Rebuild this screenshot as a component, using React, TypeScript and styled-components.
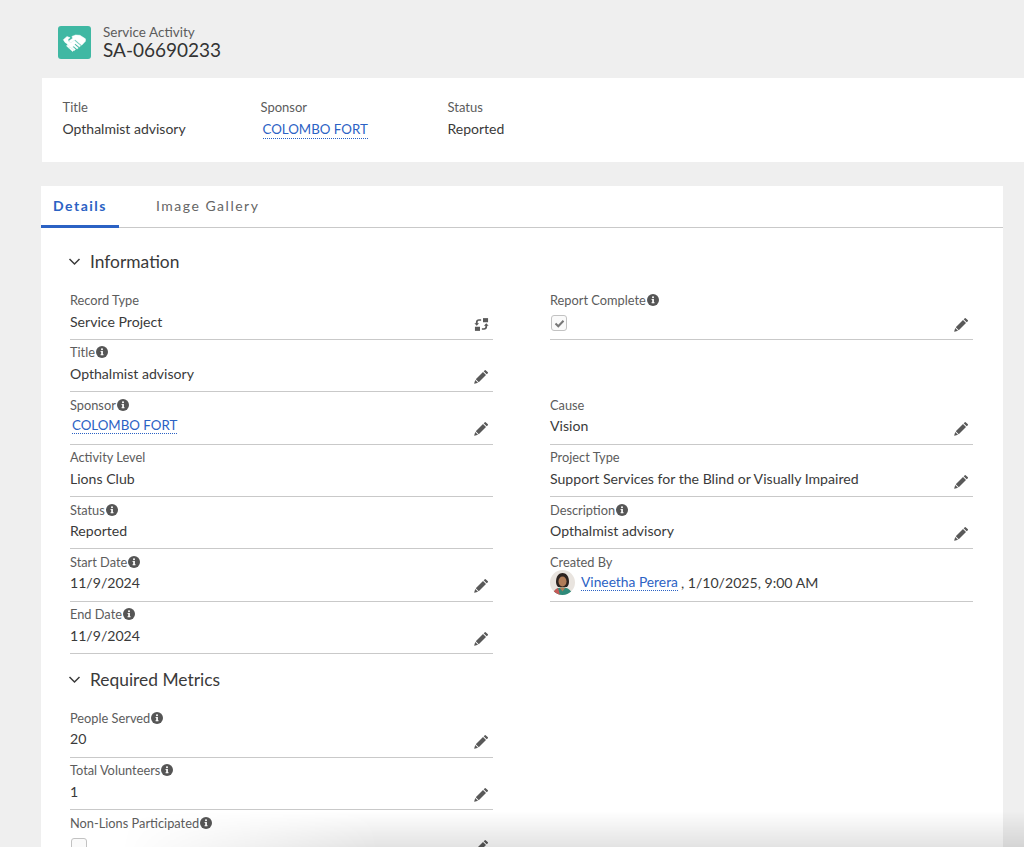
import styled, { createGlobalStyle } from 'styled-components'
import { ReactNode } from 'react'

const GlobalStyle = createGlobalStyle`
    html, body {
        margin: 0;
        height: 847px;
        overflow: hidden;
        background: #efefef;
    }
    body {
        font-family: "Lato", "Open Sans", sans-serif;
        color: #3a3a3a;
    }
`

const PencilIcon = () => (
    <svg width="15" height="15" viewBox="0 0 16 16" fill="#595959">
        <path d="M11.6 1.2a.6.6 0 0 1 .85 0l2.35 2.35a.6.6 0 0 1 0 .85L13.5 5.7l-3.2-3.2z" />
        <path d="M9.6 3.2l3.2 3.2-7.700 7.700-3.2-3.2z" />
        <path d="M1.3 11.700l3 3-3.700.9a.3.3 0 0 1-.35-.35z" />
    </svg>
)

const SwapIcon = () => (
    <svg width="15" height="15" viewBox="0 0 16 16" fill="#595959">
        <rect x="9.600" y="1.200" width="5.400" height="4.400" />
        <rect x="1" y="10.400" width="5.400" height="4.400" />
        <path d="M7.600 2.400v1.700H5.400c-.9 0-1.500.6-1.500 1.500v1h1.500L2.900 9.400.4 6.600h1.600v-1c0-1.900 1.400-3.200 3.300-3.200z" />
        <path d="M8.400 13.600v-1.700h2.200c.9 0 1.500-.6 1.500-1.500v-1h-1.500l2.500-2.800 2.500 2.800H14v1c0 1.900-1.400 3.200-3.300 3.200z" />
    </svg>
)

const InfoIcon = () => (
    <InfoWrap viewBox="0 0 12 12">
        <circle cx="6" cy="6" r="6" fill="#555" />
        <rect x="5.200" y="5" width="1.700" height="4.100" fill="#fff" />
        <rect x="4.500" y="8.300" width="3.100" height="0.900" fill="#fff" />
        <rect x="4.500" y="5" width="1.500" height="0.800" fill="#fff" />
        <circle cx="6" cy="3.300" r="1" fill="#fff" />
    </InfoWrap>
)

const HandshakeIcon = () => (
    <svg width="25" height="25" viewBox="0 0 24 24" fill="#fff" stroke="#fff" strokeWidth="0.5">
        <path d="M9.500 6.200 13 4.800l4.200.3 5.300 3.400v2.200l-3.600 3.900-6.300-5.200-3.200 2.200c-1 .6-2.300 0-2.500-1.200l3.400-2.400z" />
        <path d="M1.300 9.300 4.800 6.300l3 1.100-2 1.500c-.1 1.800 1.200 3 3 3.100l3-2 6 5-1 1.300-3.900-3.200-.9 1 3.600 3-1 1.200-3.600-3-.8 1 2.700 2.300-1 1.100-5.500-4.700-2.200-2.400-1.300-.7z" />
        <path d="M4.300 15.300l1-1 2.600 2.100-1 1.100zM7 17.800l1-1.100 3.300 2.800-1 1.100z" />
    </svg>
)

const Avatar = () => (
    <AvatarWrap viewBox="0 0 25 25">
        <rect width="25" height="25" fill="#e9e4df" />
        <path d="M6 12c0-6 3-9 6.500-9S19 6 19 12c0 2-1 4-2 5H8c-1-1-2-3-2-5z" fill="#2c2320" />
        <ellipse cx="12.500" cy="11.500" rx="4" ry="5" fill="#b07c58" />
        <path d="M3 25c.5-5 4-7.500 9.500-7.500S21.500 20 22 25z" fill="#2f8a7a" />
        <path d="M9.500 17.500h6l-3 4z" fill="#b07c58" />
        <path d="M3 25c.5-4 2-6 5-7l2 7z" fill="#c65a57" />
    </AvatarWrap>
)

type FieldProps = {
    label?: string,
    info?: boolean,
    value?: ReactNode,
    action?: 'edit' | 'swap',
    blank?: boolean,
}

const Field = ({ label, info, value, action, blank }: FieldProps) => {
    if (blank) return <FieldBox $blank />
    return (
        <FieldBox>
            <FieldLabel>{label}{info && <InfoIcon />}</FieldLabel>
            <FieldValue>{value}</FieldValue>
            {action && (
                <ActionSlot>
                    {action === 'edit' ? <PencilIcon /> : <SwapIcon />}
                </ActionSlot>
            )}
        </FieldBox>
    )
}

const Chevron = () => (
    <svg width="13" height="13" viewBox="0 0 13 13" fill="none" stroke="#3a3a3a" strokeWidth="1.5">
        <path d="M1.500 4l5 5 5-5" />
    </svg>
)

export default function App() {
    return (
        <>
            <GlobalStyle />
            <Page>
                <Header>
                    <IconTile><HandshakeIcon /></IconTile>
                    <HeaderText>
                        <ObjectName>Service Activity</ObjectName>
                        <RecordName>SA-06690233</RecordName>
                    </HeaderText>
                </Header>

                <Highlights>
                    <HighlightItem $width={198}>
                        <HighlightLabel>Title</HighlightLabel>
                        <HighlightValue>Opthalmist advisory</HighlightValue>
                    </HighlightItem>
                    <HighlightItem $width={187}>
                        <HighlightLabel>Sponsor</HighlightLabel>
                        <HighlightLink>COLOMBO FORT</HighlightLink>
                    </HighlightItem>
                    <HighlightItem $width={120}>
                        <HighlightLabel>Status</HighlightLabel>
                        <HighlightValue>Reported</HighlightValue>
                    </HighlightItem>
                </Highlights>

                <Card>
                    <Tabs>
                        <Tab $active>Details</Tab>
                        <Tab>Image Gallery</Tab>
                    </Tabs>
                    <Body>
                        <SectionTitle>
                            <Chevron />
                            Information
                        </SectionTitle>
                        <FieldGrid>
                            <Field label="Record Type" value="Service Project" action="swap" />
                            <Field
                                label="Report Complete"
                                info
                                value={
                                    <Checkbox>
                                        <svg width="11" height="11" viewBox="0 0 11 11" fill="none" stroke="#777" strokeWidth="2">
                                            <path d="M1.500 5.500l2.800 2.800 5.200-5.600" />
                                        </svg>
                                    </Checkbox>
                                }
                                action="edit"
                            />
                            <Field label="Title" info value="Opthalmist advisory" action="edit" />
                            <Field blank />
                            <Field label="Sponsor" info value={<SponsorLink>COLOMBO FORT</SponsorLink>} action="edit" />
                            <Field label="Cause" value="Vision" action="edit" />
                            <Field label="Activity Level" value="Lions Club" />
                            <Field label="Project Type" value="Support Services for the Blind or Visually Impaired" action="edit" />
                            <Field label="Status" info value="Reported" />
                            <Field label="Description" info value="Opthalmist advisory" action="edit" />
                            <Field label="Start Date" info value="11/9/2024" action="edit" />
                            <Field
                                label="Created By"
                                value={
                                    <CreatedBy>
                                        <Avatar />
                                        <PersonLink>Vineetha Perera</PersonLink>, 1/10/2025, 9:00 AM
                                    </CreatedBy>
                                }
                            />
                            <Field label="End Date" info value="11/9/2024" action="edit" />
                        </FieldGrid>

                        <SectionTitle $second>
                            <Chevron />
                            Required Metrics
                        </SectionTitle>
                        <FieldGrid>
                            <Field label="People Served" info value="20" action="edit" />
                            <Field blank />
                            <Field label="Total Volunteers" info value="1" action="edit" />
                            <Field blank />
                            <Field label="Non-Lions Participated" info value={<Checkbox />} action="edit" />
                        </FieldGrid>
                    </Body>
                </Card>
                <BottomFade />
            </Page>
        </>
    )
}

const Page = styled.div`
    position: relative;
    height: 847px;
    overflow: hidden;
    background: #efefef;
`

const Header = styled.header`
    display: flex;
    align-items: flex-start;
    gap: 12px;
    height: 78px;
    padding: 26px 0 0 58px;
    box-sizing: border-box;
`

const IconTile = styled.div`
    display: flex;
    align-items: center;
    justify-content: center;
    width: 33px;
    height: 33px;
    border-radius: 3px;
    background: #3fb8a3;
`

const HeaderText = styled.div`
    display: flex;
    flex-direction: column;
`

const ObjectName = styled.div`
    font-size: 13.5px;
    line-height: 13px;
    color: #5c5c5c;
`

const RecordName = styled.div`
    font-size: 19px;
    line-height: 22px;
    color: #333;
`

const Highlights = styled.section`
    display: flex;
    height: 84px;
    margin-left: 42px;
    padding: 21px 0 0 20.5px;
    box-sizing: border-box;
    background: #fff;
`

const HighlightItem = styled.div<{ $width: number }>`
    width: ${p => p.$width}px;
`

const HighlightLabel = styled.div`
    font-size: 13px;
    line-height: 16px;
    color: #5c5c5c;
`

const HighlightValue = styled.div`
    margin-top: 5px;
    font-size: 14px;
    line-height: 18px;
    color: #3a3a3a;
`

const HighlightLink = styled.a`
    display: inline-block;
    margin: 5px 0 0 2px;
    font-size: 13.3px;
    line-height: 18px;
    color: #2b62c4;
    border-bottom: 1px dotted #2b62c4;
`

const Card = styled.section`
    width: 962px;
    margin: 24px 0 0 41px;
    background: #fff;
`

const Tabs = styled.nav`
    display: flex;
    height: 42px;
    box-sizing: border-box;
    border-bottom: 1px solid #c9c9c9;
`

const Tab = styled.div<{ $active?: boolean }>`
    width: ${p => p.$active ? '78px' : 'auto'};
    margin-left: ${p => p.$active ? '0' : '37px'};
    height: 42px;
    box-sizing: border-box;
    padding-top: 11px;
    text-align: center;
    font-size: 14px;
    line-height: 18px;
    letter-spacing: 1.5px;
    font-weight: ${p => p.$active ? 700 : 400};
    color: ${p => p.$active ? '#2b62c4' : '#666'};
    border-bottom: ${p => p.$active ? '3px solid #2b62c4' : 'none'};
`

const Body = styled.div`
    padding: 0 29px;
`

const SectionTitle = styled.h3<{ $second?: boolean }>`
    display: flex;
    align-items: center;
    gap: 9px;
    margin: 0 0 0 -2px;
    padding: ${p => p.$second ? '0' : '7px 0 0'};
    box-sizing: border-box;
    font-size: 17.4px;
    font-weight: 400;
    color: #3a3a3a;
    height: ${p => p.$second ? '51px' : '59.5px'};
`

const FieldGrid = styled.div`
    display: grid;
    grid-template-columns: 423px 423px;
    column-gap: 57px;
    grid-auto-rows: 52.4px;
`

const FieldBox = styled.div<{ $blank?: boolean }>`
    position: relative;
    box-sizing: border-box;
    padding-top: 4.5px;
    border-bottom: ${p => p.$blank ? 'none' : '1px solid #c9c9c9'};
`

const FieldLabel = styled.div`
    display: flex;
    align-items: center;
    height: 16px;
    font-size: 12.8px;
    line-height: 16px;
    color: #5c5c5c;
`

const InfoWrap = styled.svg`
    width: 12px;
    height: 12px;
    margin-left: 1px;
`

const FieldValue = styled.div`
    margin-top: 3px;
    height: 20px;
    display: flex;
    align-items: center;
    font-size: 14.1px;
    color: #3a3a3a;
    white-space: nowrap;
`

const ActionSlot = styled.div`
    position: absolute;
    right: 4px;
    top: 28px;
    width: 15px;
    height: 15px;
`

const SponsorLink = styled.a`
    margin-left: 2px;
    font-size: 13.3px;
    color: #2b62c4;
    border-bottom: 1px dotted #2b62c4;
    line-height: 16px;
`

const PersonLink = styled.a`
    color: #2b62c4;
    border-bottom: 1px dotted #2b62c4;
    line-height: 16px;
    margin-right: 3px;
    font-size: 13.8px;
`

const CreatedBy = styled.div`
    display: flex;
    align-items: center;
    white-space: pre;
`

const AvatarWrap = styled.svg`
    width: 25px;
    height: 25px;
    margin-right: 6px;
    border-radius: 50%;
`

const Checkbox = styled.span`
    display: flex;
    align-items: center;
    justify-content: center;
    width: 16px;
    height: 16px;
    margin: 4px 0 0 1px;
    box-sizing: border-box;
    border: 1px solid #c2c2c2;
    border-radius: 3px;
    background: #fafafa;
`

const BottomFade = styled.div`
    position: absolute;
    left: 120px;
    right: 0;
    bottom: 0;
    height: 36px;
    pointer-events: none;
    background: linear-gradient(to bottom, rgba(0, 0, 0, 0), rgba(0, 0, 0, 0.11));
    mask-image: linear-gradient(to right, transparent 0, black 260px);
`
